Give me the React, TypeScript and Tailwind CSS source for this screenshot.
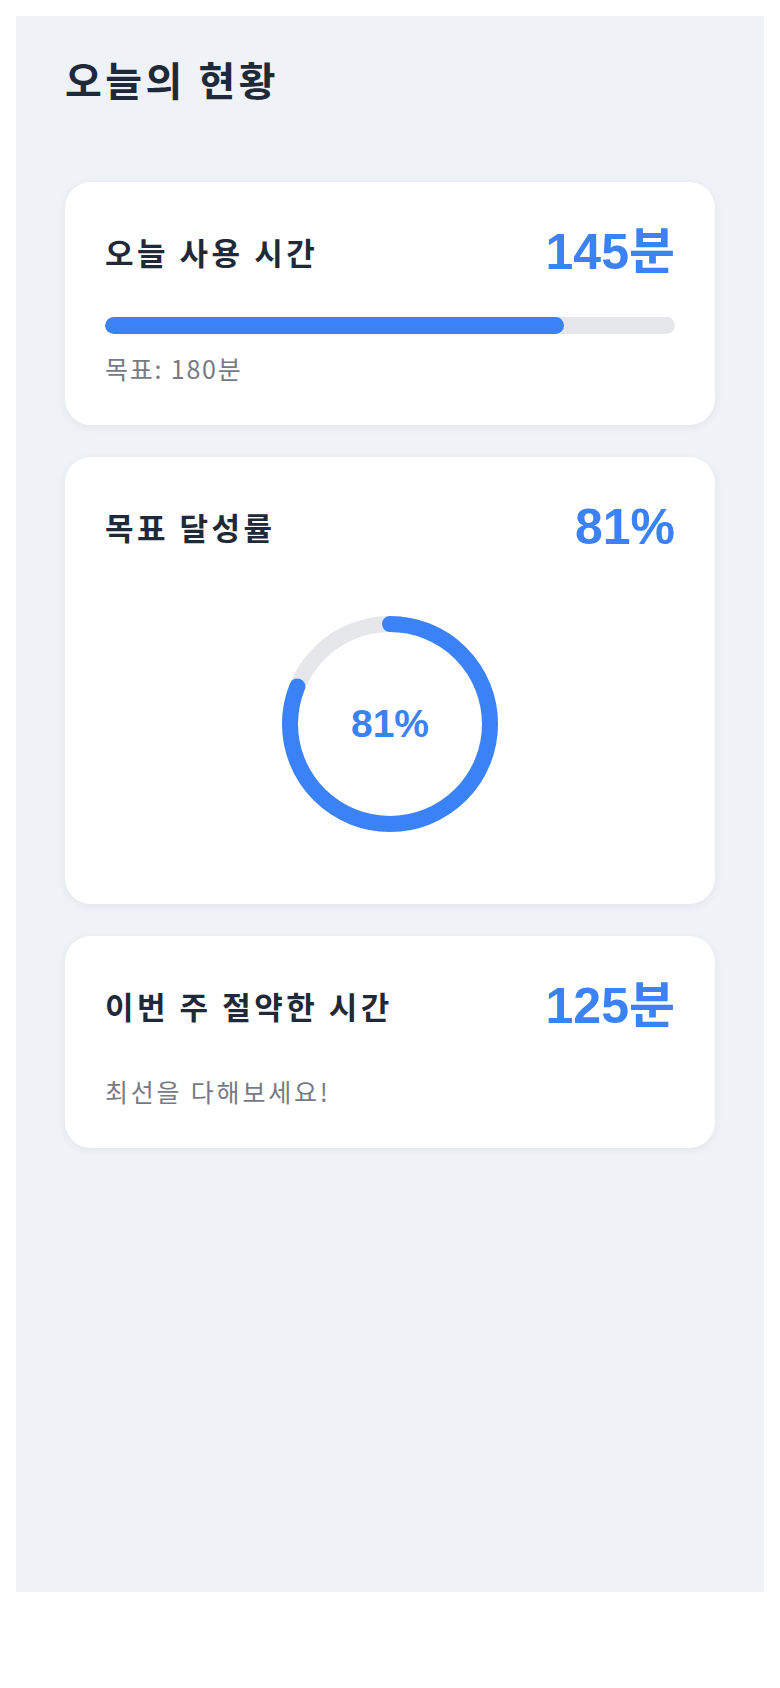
const kr = { fontFamily: '"Noto Sans CJK KR", "Noto Sans", sans-serif' };
const num = { fontFamily: '"Liberation Sans", "Noto Sans CJK KR", sans-serif' };

const Card = ({ children }: { children: React.ReactNode }) => (
  <div className="bg-white rounded-[26px] p-[40px] shadow-[0_2px_10px_rgba(15,23,42,0.06)]">{children}</div>
);

const Header = ({ title, value }: { title: string; value: string }) => (
  <div className="flex items-center justify-between">
    <h2 className="text-[31px] leading-[40px] font-bold tracking-[3.5px] text-[#1f2937]" style={kr}>
      {title}
    </h2>
    <span className="text-[50px] leading-[60px] font-bold text-[#3b82f6]" style={num}>
      {value}
    </span>
  </div>
);

const Ring = ({ percent }: { percent: number }) => {
  const size = 216;
  const stroke = 16;
  const r = (size - stroke) / 2;
  const c = 2 * Math.PI * r;
  return (
    <div className="relative w-[216px] h-[216px]">
      <svg width={size} height={size} viewBox={`0 0 ${size} ${size}`} className="-rotate-90">
        <circle cx={size / 2} cy={size / 2} r={r} fill="none" stroke="#e5e7eb" strokeWidth={stroke} />
        <circle
          cx={size / 2}
          cy={size / 2}
          r={r}
          fill="none"
          stroke="#3b82f6"
          strokeWidth={stroke}
          strokeLinecap="round"
          strokeDasharray={c}
          strokeDashoffset={c * (1 - percent / 100)}
        />
      </svg>
      <div
        className="absolute inset-0 flex items-center justify-center text-[39px] font-bold text-[#3b82f6]"
        style={num}
      >
        {percent}%
      </div>
    </div>
  );
};

export default function App() {
  const used = 145;
  const goal = 180;
  const pct = Math.round((used / goal) * 100);

  return (
    <div className="bg-white min-h-[1688px] p-4" style={kr}>
      <div className="bg-[#eff3f8] h-[1576px] px-[49px] pt-[33px]">
        <h1 className="text-[40px] leading-[60px] font-bold tracking-[3.5px] text-[#1f2937]">오늘의 현황</h1>
        <div className="mt-[73px] flex flex-col gap-[32px]">
          <Card>
            <Header title="오늘 사용 시간" value={`${used}분`} />
            <div className="mt-[35px] h-[17px] rounded-full bg-[#e5e7eb] overflow-hidden">
              <div className="h-full rounded-full bg-[#3b82f6]" style={{ width: `${(used / goal) * 100}%` }} />
            </div>
            <p className="mt-[18px] text-[25px] leading-[33px] tracking-[1.8px] text-[#757b85]">목표: {goal}분</p>
          </Card>
          <Card>
            <Header title="목표 달성률" value={`${pct}%`} />
            <div className="flex justify-center mt-[59px] mb-[32px]">
              <Ring percent={pct} />
            </div>
          </Card>
          <Card>
            <Header title="이번 주 절약한 시간" value="125분" />
            <p className="mt-[39px] text-[25px] leading-[33px] tracking-[2.8px] text-[#757b85]">최선을 다해보세요!</p>
          </Card>
        </div>
      </div>
    </div>
  );
}
